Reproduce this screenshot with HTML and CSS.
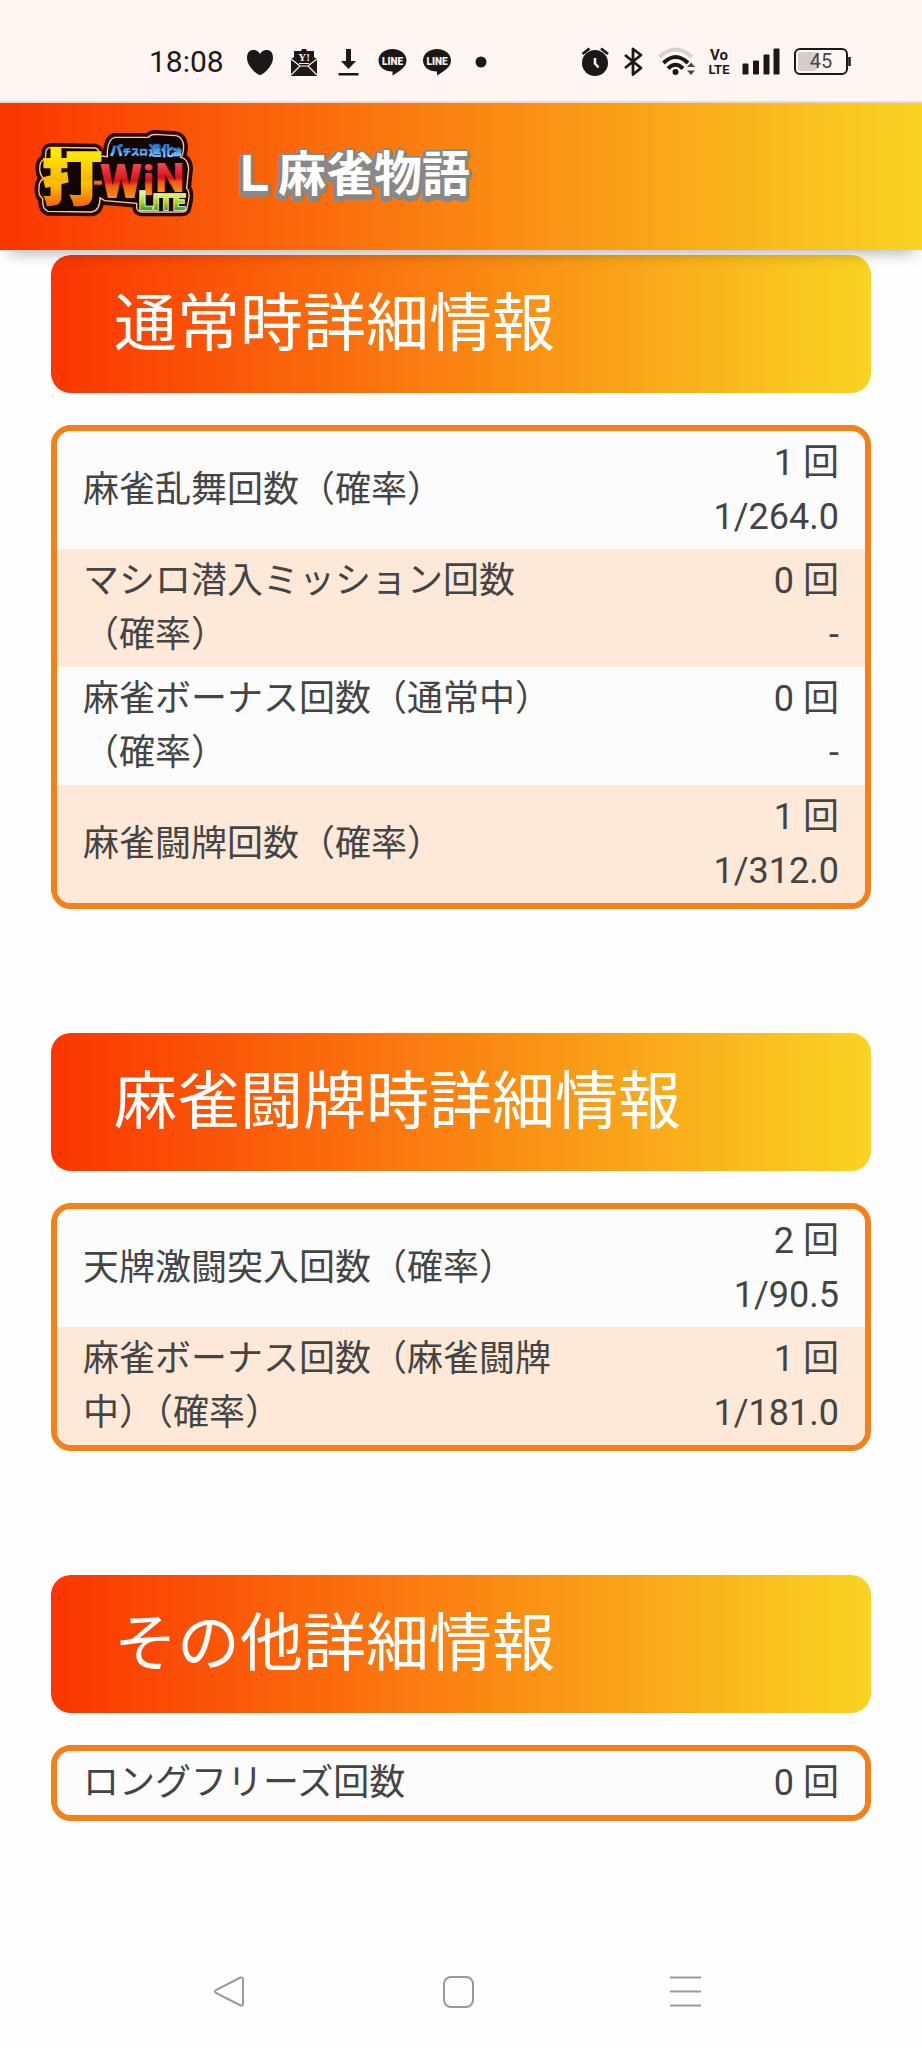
FILE: index.html
```html
<!DOCTYPE html>
<html lang="ja">
<head>
    <meta charset="UTF-8">
    <meta name="viewport" content="width=device-width, initial-scale=1.0">
    <title>L 麻雀物語</title>
    <link rel="stylesheet" href="styles.css">
</head>
<body>

    <!-- Status bar -->
    <div class="status-bar">
        <div class="status-left">
            <span class="clock">18:08</span>
            <svg class="notice" viewBox="0 0 32 32" width="32" height="32">
                <path d="M16 29 C13 29 3 20 3 12 C3 6 6 4 9.500 4 C12 4 14.500 5 16 8 C17.500 5 20 4 22.500 4 C26 4 29 6 29 12 C29 20 19 29 16 29 Z" fill="#1b1918"/>
            </svg>
            <svg class="notice" viewBox="0 0 32 32" width="32" height="32">
                <path d="M3 13 L6 11 V5 H13 L14 3 H18 L19 5 H26 V11 L29 13 V30 H3 Z" fill="#1b1918"/>
                <path d="M3 13 L12 20 H20 L29 13 M3 29 L12 20 M29 29 L20 20" fill="none" stroke="#fff5f2" stroke-width="1.200"/>
                <text x="16" y="15" text-anchor="middle" class="mail-mark">Y!</text>
                <path d="M11 17.500 H21" stroke="#fff5f2"/>
            </svg>
            <svg class="notice" viewBox="0 0 32 32" width="32" height="32">
                <path d="M14 3 H19 V15 H24 L16.500 23 L9 15 H14 Z M6.500 27 H26.500 V29.500 H6.500 Z" fill="#1b1918"/>
            </svg>
            <svg class="notice" viewBox="0 0 32 32" width="32" height="32">
                <path d="M16.500 3 C24.500 3 30.500 8 30.500 14.500 C30.500 21 24.500 24.500 16.500 29.500 V25.500 C8.500 25.500 2.500 21 2.500 14.500 C2.500 8 8.500 3 16.500 3 Z" fill="#1b1918"/>
                <text x="16.500" y="19" text-anchor="middle" class="line-mark">LINE</text>
            </svg>
            <svg class="notice" viewBox="0 0 32 32" width="32" height="32">
                <path d="M17 3 C25 3 31 8 31 14.500 C31 21 25 24.500 17 29.500 V25.500 C9 25.500 3 21 3 14.500 C3 8 9 3 17 3 Z" fill="#1b1918"/>
                <text x="17" y="19" text-anchor="middle" class="line-mark">LINE</text>
            </svg>
            <svg class="notice" viewBox="0 0 32 32" width="32" height="32">
                <circle cx="17" cy="16" r="5.500" fill="#1b1918"/>
            </svg>
        </div>
        <div class="status-right">
            <svg viewBox="0 0 28 32" width="28" height="32">
                <circle cx="13" cy="17" r="13" fill="#1b1918"/>
                <path d="M0.500 8 L7.500 2.500 M26 8 L19 2.500" stroke="#1b1918" stroke-width="2.800"/>
                <path d="M13 12 V17.500 L16.500 21.500" fill="none" stroke="#fff5f2" stroke-width="2.500"/>
            </svg>
            <svg viewBox="0 0 18 32" width="18" height="32">
                <path d="M0 9 L16 22 L8 28.500 V3 L16 9 L0 22" fill="none" stroke="#1b1918" stroke-width="2.800" stroke-linejoin="round"/>
            </svg>
            <svg viewBox="0 0 37 32" width="37" height="32">
                <path d="M1.500 11 Q17.500 -4 34 11" fill="none" stroke="#d9d1ce" stroke-width="4"/>
                <path d="M5.500 17 Q17.500 5 30 17 M10 22.500 Q17.500 15 25 22.500" fill="none" stroke="#1b1918" stroke-width="4"/>
                <circle cx="17.500" cy="26" r="3" fill="#1b1918"/>
                <path d="M29 21 L33 16.500 L37 21 Z M29 24.500 L33 29 L37 24.500 Z" fill="#4a4644"/>
            </svg>
            <svg viewBox="0 0 18 32" width="18" height="32">
                <text x="9" y="14" text-anchor="middle" class="volte-top">Vo</text>
                <text x="9" y="28" text-anchor="middle" class="volte-bottom">LTE</text>
            </svg>
            <svg viewBox="0 0 36 32" width="36" height="32">
                <path d="M0 18 H5 V28 H0 Z M10.500 15 H15.500 V28 H10.500 Z M21 9 H26 V28 H21 Z M31 3 H36 V28 H31 Z" fill="#1b1918" stroke="#1b1918" stroke-width="1" stroke-linejoin="round"/>
            </svg>
            <svg viewBox="0 0 57 32" width="57" height="32">
                <rect x="4" y="6" width="19" height="19" rx="3" fill="#d5cdca"/>
                <rect x="1" y="3" width="52" height="25" rx="5" fill="none" stroke="#1b1918" stroke-width="2"/>
                <path d="M55.500 11 V20" stroke="#1b1918" stroke-width="2.500"/>
                <text x="27" y="22" text-anchor="middle" class="battery-level">45</text>
            </svg>
        </div>
    </div>

    <!-- App header -->
    <header class="app-header">
        <a href="#" class="logo">
            <svg viewBox="0 0 570 330" width="190" height="110">
                <defs>
                    <linearGradient id="gold" x1="0" y1="0" x2="0" y2="1">
                        <stop offset="0.150" stop-color="#ffe600"/>
                        <stop offset="0.500" stop-color="#f9b800"/>
                        <stop offset="0.550" stop-color="#ffc400"/>
                        <stop offset="0.850" stop-color="#ee6c0c"/>
                    </linearGradient>
                    <linearGradient id="fire" x1="0" y1="0" x2="0" y2="1">
                        <stop offset="0.200" stop-color="#f0454a"/>
                        <stop offset="0.500" stop-color="#d8101c"/>
                        <stop offset="0.580" stop-color="#ee5a10"/>
                        <stop offset="0.850" stop-color="#f9a01c"/>
                    </linearGradient>
                    <linearGradient id="leaf" x1="0" y1="0" x2="0" y2="1">
                        <stop offset="0.250" stop-color="#e8f088"/>
                        <stop offset="0.550" stop-color="#a8d820"/>
                        <stop offset="0.850" stop-color="#1f9a2c"/>
                    </linearGradient>
                    <linearGradient id="sky" x1="0" y1="0" x2="0" y2="1">
                        <stop offset="0.200" stop-color="#2a7ad4"/>
                        <stop offset="0.850" stop-color="#8cd0f8"/>
                    </linearGradient>
                    <path id="plate" d="M78 92 Q82 82 96 82 L225 84 Q238 86 240 108 L262 110 L262 92 Q266 56 284 52 L385 52 Q392 43 405 43 L468 47 Q488 50 491 78 Q490 105 482 112 Q504 116 506 145 L500 205 Q510 214 506 240 L500 268 Q496 276 485 276 L365 276 Q350 274 350 262 L350 250 L254 242 L240 234 Q240 272 215 276 L84 274 Q66 268 68 236 Q54 228 57 200 Q58 184 70 176 Q56 160 60 135 Q64 120 76 116 Z"/>
                </defs>
                <use href="#plate" fill="none" stroke="#2a0a00" stroke-width="26" stroke-linejoin="round"/>
                <use href="#plate" fill="#120400" stroke="#ffc896" stroke-width="4"/>
                <path d="M222 182 H246 V194 H222 Z" fill="#ee6c0c"/>
                <text x="66" y="240" class="logo-da">打</text>
                <text x="240" y="233" class="logo-w">W</text>
                <text x="368" y="224" class="logo-in">i</text>
                <text x="406" y="216" class="logo-in">N</text>
                <text x="356" y="269" class="logo-lite"><tspan class="logo-lite-big">L</tspan>ITE</text>
                <text x="270" y="106" class="logo-small"><tspan class="logo-pa">パ</tspan>チスロ</text>
                <text x="386" y="106" class="logo-pa">進化</text>
                <text x="460" y="104" class="logo-small">論</text>
            </svg>
        </a>
        <h1 class="machine-name">Ｌ麻雀物語</h1>
    </header>

    <!-- Detail tables -->
    <main>
        <section>
            <h2>通常時詳細情報</h2>
            <div class="table-box">
                <table>
                    <tr>
                        <th>麻雀乱舞回数（確率）</th>
                        <td>1 回<br>1/264.0</td>
                    </tr>
                    <tr>
                        <th>マシロ潜入ミッション回数（確率）</th>
                        <td>0 回<br>-</td>
                    </tr>
                    <tr>
                        <th>麻雀ボーナス回数（通常中）（確率）</th>
                        <td>0 回<br>-</td>
                    </tr>
                    <tr>
                        <th>麻雀闘牌回数（確率）</th>
                        <td>1 回<br>1/312.0</td>
                    </tr>
                </table>
            </div>
        </section>

        <section>
            <h2>麻雀闘牌時詳細情報</h2>
            <div class="table-box">
                <table>
                    <tr>
                        <th>天牌激闘突入回数（確率）</th>
                        <td>2 回<br>1/90.5</td>
                    </tr>
                    <tr>
                        <th>麻雀ボーナス回数（麻雀闘牌中）（確率）</th>
                        <td>1 回<br>1/181.0</td>
                    </tr>
                </table>
            </div>
        </section>

        <section>
            <h2>その他詳細情報</h2>
            <div class="table-box">
                <table>
                    <tr>
                        <th>ロングフリーズ回数</th>
                        <td>0 回</td>
                    </tr>
                </table>
            </div>
        </section>
    </main>

    <!-- System navigation -->
    <nav class="nav-bar">
        <button type="button" aria-label="戻る">
            <svg viewBox="0 0 32 32" width="32" height="32">
                <path d="M27.500 1.500 L3 14 Q1 15.500 3 17 L27.500 29.500 Q30 30 30 27.500 V3.500 Q30 1 27.500 1.500 Z"/>
            </svg>
        </button>
        <button type="button" aria-label="ホーム">
            <svg viewBox="0 0 32 32" width="32" height="32">
                <rect x="3" y="1" width="29" height="30" rx="7"/>
            </svg>
        </button>
        <button type="button" aria-label="履歴">
            <svg viewBox="0 0 32 32" width="32" height="32">
                <path d="M1 1.500 H32 M1 15.500 H32 M1 29.500 H32"/>
            </svg>
        </button>
    </nav>

</body>
</html>
```

FILE: styles.css
```css
/* General Styles */
* {
    box-sizing: border-box;
}

body {
    font-family: Roboto, 'Noto Sans CJK JP', sans-serif;
    margin: 0;
    background: #fefefe;
    color: #444;
    display: flex;
    flex-direction: column;
    min-height: 100vh;
}

svg {
    display: block;
    overflow: visible;
}

/* Status bar */
.status-bar {
    display: flex;
    justify-content: space-between;
    align-items: center;
    height: 103px;
    padding: 22px 71px 0 149px;
    background: #fff5f2;
    border-bottom: 2px solid #ecdad0;
}

.status-left,
.status-right {
    display: flex;
    align-items: center;
}

.status-left {
    gap: 12px;
}

.status-right {
    gap: 15px;
}

.clock {
    font-size: 30px;
    line-height: 32px;
    color: #1b1918;
    margin-right: 8px;
}

.mail-mark {
    font: bold 11px 'Liberation Serif', serif;
    fill: #fff5f2;
}

.line-mark {
    font-size: 10px;
    font-weight: 900;
    fill: #fff5f2;
}

.volte-top {
    font-size: 15px;
    font-weight: 700;
    fill: #1b1918;
}

.volte-bottom {
    font-family: 'Liberation Sans Narrow', Roboto, sans-serif;
    font-size: 13px;
    font-weight: 700;
    fill: #1b1918;
}

.battery-level {
    font-size: 20px;
    fill: #4a4644;
}

/* App header */
.app-header {
    position: relative;
    z-index: 1;
    display: flex;
    align-items: center;
    gap: 20px;
    padding: 17px 20px 20px;
    background: linear-gradient(to right, #fb3500, #f9d423);
    box-shadow: 0 12px 14px -9px rgba(0, 0, 0, 0.3);
}

.machine-name {
    margin: 0;
    font-size: 48px;
    line-height: 72px;
    color: #fff;
    text-shadow:
        -4px 2px 0 #888,
        3px 2px 0 #888,
        -1px -2px 0 #888,
        -1px 6px 0 #888,
        -3px -1px 0 #888,
        2px -1px 0 #888,
        -4px 5px 0 #888,
        2px 5px 0 #888;
}

/* Logo lettering */
.logo-da,
.logo-w,
.logo-in,
.logo-lite,
.logo-small,
.logo-pa {
    font-weight: 900;
    stroke: #120400;
    stroke-width: 5px;
    paint-order: stroke;
}

.logo-da {
    font-size: 180px;
    fill: url(#gold);
    stroke: url(#gold);
    stroke-width: 6px;
}

.logo-w {
    font-size: 146px;
    fill: url(#fire);
}

.logo-in {
    font-size: 124px;
    fill: url(#fire);
}

.logo-lite {
    font-size: 66px;
    fill: url(#leaf);
    stroke: #f4ffe0;
}

.logo-lite-big {
    font-size: 78px;
}

.logo-small {
    font-size: 25px;
    fill: url(#sky);
    stroke: #2a7ad4;
    stroke-width: 2px;
}

.logo-pa {
    font-size: 38px;
    fill: url(#sky);
    stroke: #2a7ad4;
    stroke-width: 2px;
}

/* Detail sections */
main {
    flex: 1;
    padding: 5px 51px 0;
}

section + section {
    margin-top: 124px;
}

h2 {
    margin: 0 0 32px;
    padding: 22px 63px;
    font-size: 63px;
    font-weight: normal;
    line-height: 94px;
    color: #fff;
    background: linear-gradient(to right, #fb3500, #f9d423);
    border-radius: 20px;
}

.table-box {
    border: 6px solid #f58019;
    border-radius: 20px;
    overflow: hidden;
}

table {
    width: 100%;
    border-collapse: collapse;
    background: #fcfcfc;
    font-size: 36px;
    line-height: 54px;
}

tr:nth-child(even) {
    background: #fee8d8;
}

th {
    width: 65%;
    padding: 5px 0 5px 26px;
    font-weight: normal;
    text-align: left;
}

td {
    padding: 5px 26px 5px 0;
    text-align: right;
}

/* System navigation */
.nav-bar {
    display: flex;
    justify-content: center;
    align-items: center;
    gap: 180px;
    height: 112px;
    padding-right: 8px;
}

.nav-bar button {
    width: 48px;
    padding: 8px;
    border: none;
    background: none;
}

.nav-bar svg {
    fill: none;
    stroke: #999;
    stroke-width: 2px;
}
```
